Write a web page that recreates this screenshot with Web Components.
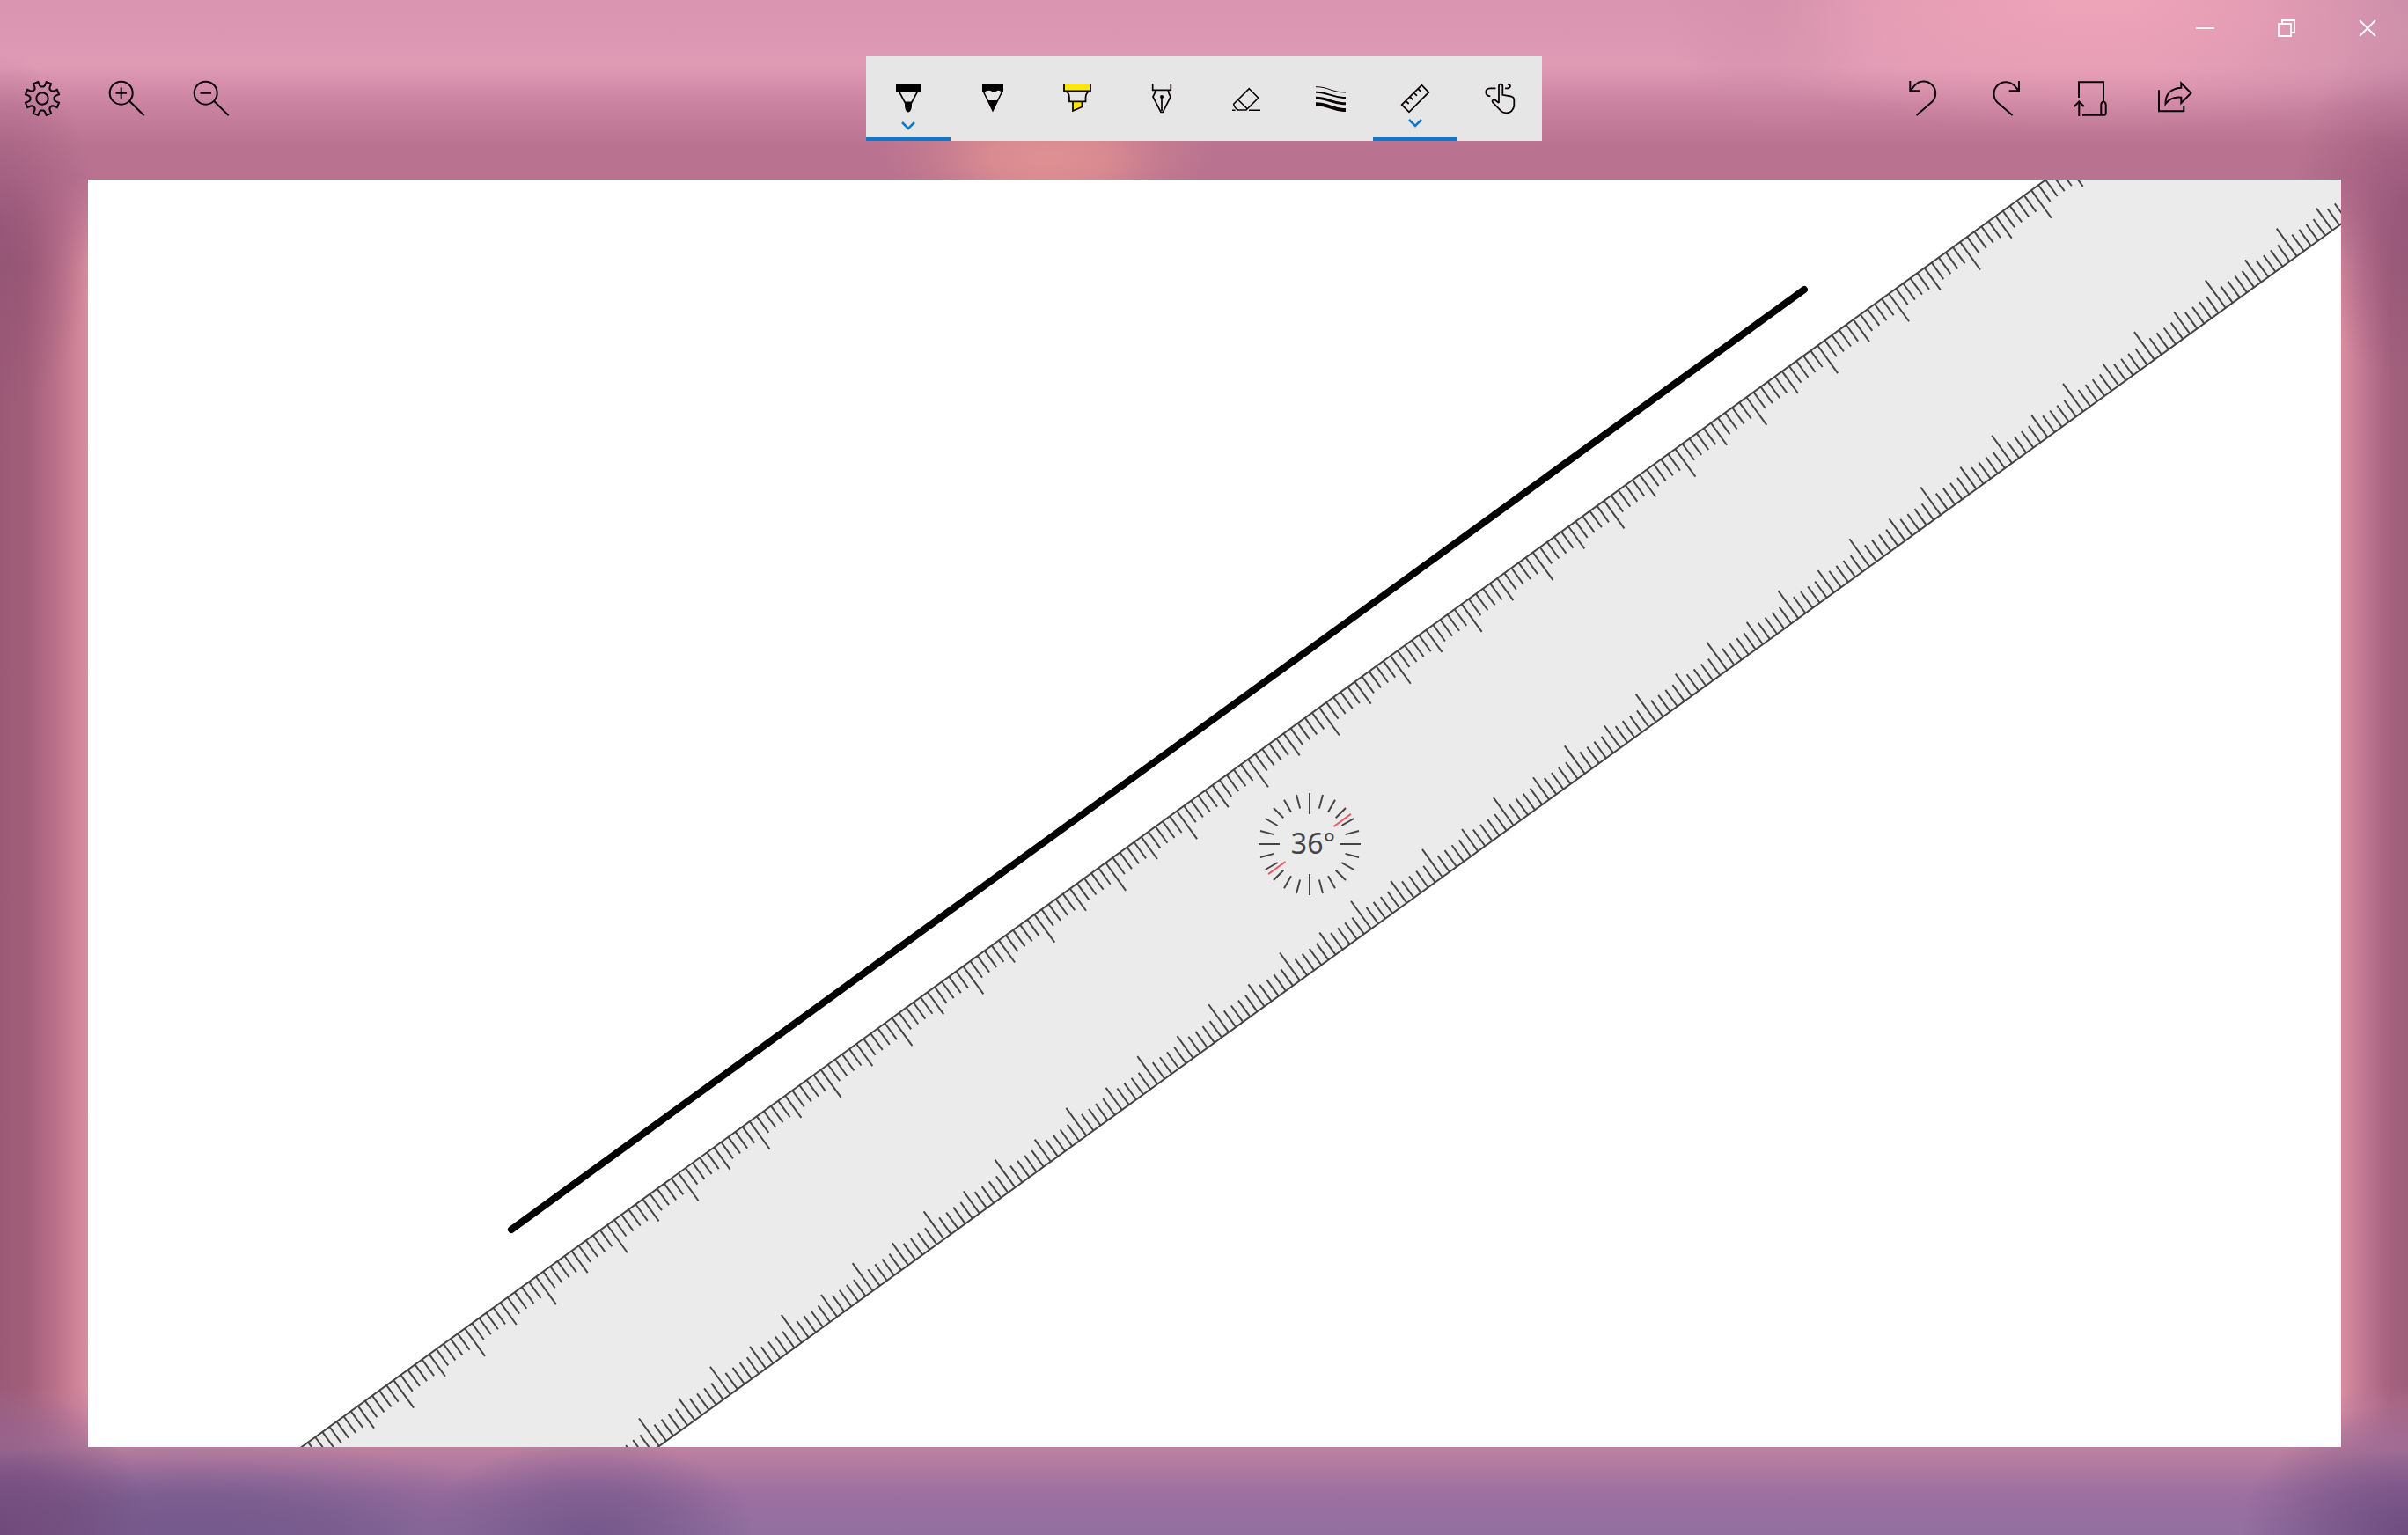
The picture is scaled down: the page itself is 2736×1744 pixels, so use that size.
<!DOCTYPE html>
<html lang="en">
<head>
<meta charset="utf-8">
<title>Sketchpad</title>
<style>
html, body { margin: 0; height: 100%; }
body { font-family: "Noto Sans", "Open Sans", sans-serif; overflow: hidden; }
</style>
</head>
<body>
<sketch-app></sketch-app>
<script>
const BLUE = '#0f78c8';

function gearPath() {
  const p = [];
  for (let k = 0; k < 8; k++) {
    for (const [a, r] of [[-14, 19.6], [-11, 15], [-6, 13.6], [6, 13.6], [11, 15], [14, 19.6]]) {
      const t = (k * 45 + a) * Math.PI / 180;
      p.push((48 + r * Math.sin(t)).toFixed(2) + ' ' + (48 - r * Math.cos(t)).toFixed(2));
    }
  }
  return 'M' + p.join('L') + 'Z';
}

const ICONS = {
  settings: `<path d="${gearPath()}"/><circle cx="48" cy="48" r="6.7"/>`,
  zoomin: '<circle cx="41.7" cy="41.7" r="13"/><path d="M51.3 51L67.7 67.3M35.5 41.7H48M41.7 35.5V48"/>',
  zoomout: '<circle cx="41.7" cy="41.7" r="13"/><path d="M51.3 51L67.7 67.3M35.5 41.7H48"/>',
  undo: '<path d="M34.3 28V39.3H45.3M34.5 39L39.5 33.2A13.5 13.5 0 1 1 58.6 52.2L41.6 67"/>',
  redo: '<path d="M62 28V39.3H50.7M61.7 39L56.7 33.2A13.5 13.5 0 1 0 37.4 52.2L54.6 67"/>',
  page: '<path d="M34 47V29.3H62V51M38 66.7H63M59.3 66V55Q59.3 52.5 62 51Q64.7 52.5 64.7 55V64.5Q64.7 66.7 62.6 66.7M34.3 68V51.5M28.8 57L34.3 51.5L39.8 57"/>',
  share: '<path d="M29 38.3V62.3H57.3V56"/><path d="M54.3 30.5L65.5 41.7L54.3 53V46.7Q43 45.5 36.5 54Q36.5 37 54.3 35.8Z"/>',
  pen: '<path fill="#000" stroke="none" d="M34 32H62V40H34ZM44 51.5H52V57Q51 63.5 48 63.5Q45 63.5 44 57Z"/><path d="M37 39L45 54M59 39L51 54" stroke-width="1.6"/>',
  pencil: '<path fill="#000" stroke="none" d="M36 32H60V40L57.5 41Q56.5 38 53 39Q50 42 48 40.5Q45 38 42.5 39Q40 39 38.5 41L36 40ZM42 50H54L48 63Z"/><path d="M36.8 39L48 61.5L59.2 39" stroke-width="1.6"/>',
  marker: '<path fill="#ffe800" stroke="none" d="M33 32H63V39H33ZM43 52H53V58L43 62.5Z"/><path d="M33 32V39.3H63V32M35 39.5Q39 42 39 47V51.3H57.5V47Q57.5 42 61.5 39.5M43 52V62L53.5 57.5V51.5" stroke-width="1.8"/>',
  nib: '<path d="M37.7 31V38.3H58.3V31M41 38.5Q40 43 38 46L47 63.5H49.3L58 46Q56 43 55.2 38.5M48 46V62" stroke-width="1.7"/><circle cx="48" cy="46" r="2" fill="#000" stroke="none"/>',
  eraser: '<path d="M51.3 36.7L61.7 47.2L48 61H38.7Q34 58 33.7 54.3ZM38.7 49.3L49.5 60M32 61.3H35.5M51 61.3H64" stroke-width="1.6"/>',
  waves: '<path d="M31 34.7C45 34.5 49 41 65 41" stroke-width="1"/><path d="M31 40.7C45 40.5 49 47 65 47" stroke-width="2"/><path d="M31 47.3C45 47.1 49 53.8 65 53.8" stroke-width="3"/><path d="M31 54.3C45 54.1 49 61 65 61" stroke-width="4"/>',
  ruler: '<path d="M55.3 32.7L63.3 41L41 63.3L32.7 55ZM51.3 37L54.5 40.2M46.7 41.6L49.9 44.8M42.1 46.2L45.3 49.4M37.5 50.8L40.7 54" stroke-width="1.8"/>',
  touch: '<path d="M43.5 36.3H37Q32.3 36.5 32.3 40.5Q32.3 45 37.3 45.3M54 36.3Q59.5 37 60 33.8Q60 31.5 56.8 31.9M47 53V34Q47 31.7 49.2 31.7Q51.3 31.7 51.3 34V43.8L61 45.5Q64.3 46.5 64.3 49.5V56.5Q62.5 64.3 55.5 64.3Q51.5 64.3 49.5 62L40 52.3Q38.8 50 41 49.3Q42 49 43.3 50L47 53" stroke-width="1.8"/>',
};

class IconButton extends HTMLElement {
  connectedCallback() {
    const on = this.hasAttribute('selected');
    const top = Number(this.getAttribute('chevron') || 0);
    this.attachShadow({ mode: 'open' }).innerHTML = `
      <style>
        :host { display: block; }
        button { display: block; width: 96px; height: 96px; padding: 0; border: 0; background: none; }
        button.on { box-shadow: inset 0 -4px ${BLUE}; }
        svg { display: block; fill: none; stroke: #0a0206; stroke-width: 2; }
      </style>
      <button class="${on ? 'on' : ''}" aria-label="${this.getAttribute('label')}">
        <svg width="96" height="96" viewBox="0 0 96 96" aria-hidden="true">${ICONS[this.getAttribute('icon')]}
        ${on ? `<path d="M41 ${top}L48 ${top + 7}L55 ${top}" stroke="${BLUE}" stroke-width="2.6"/>` : ''}</svg>
      </button>`;
  }
}
customElements.define('icon-button', IconButton);

class TitleBar extends HTMLElement {
  connectedCallback() {
    const b = (label, d) => `<button aria-label="${label}"><svg width="92" height="64" viewBox="0 0 92 64"><path d="${d}"/></svg></button>`;
    this.attachShadow({ mode: 'open' }).innerHTML = `
      <style>
        :host { display: flex; justify-content: flex-end; height: 64px; }
        button { display: block; width: 92px; height: 64px; padding: 0; border: 0; background: none; }
        svg { display: block; fill: none; stroke: #fff; stroke-width: 1.8; }
      </style>
      ${b('Minimize', 'M35 32H56')}
      ${b('Restore', 'M37 27H51V41H37ZM41 27V23H55V37H51')}
      ${b('Close', 'M37 23L55 41M55 23L37 41')}`;
  }
}
customElements.define('title-bar', TitleBar);

class CommandBar extends HTMLElement {
  connectedCallback() {
    this.attachShadow({ mode: 'open' }).innerHTML = `
      <style>
        :host { display: grid; grid-template-columns: 1fr auto 1fr; }
        div { display: flex; }
        .tools { background: #e6e6e6; }
        .end { justify-content: flex-end; padding-right: 216px; }
      </style>
      <div><slot name="start"></slot></div>
      <div class="tools" role="toolbar"><slot></slot></div>
      <div class="end"><slot name="end"></slot></div>`;
  }
}
customElements.define('command-bar', CommandBar);

class AngleRuler extends HTMLElement {
  connectedCallback() {
    const angle = Number(this.getAttribute('angle'));
    let ticks = '', dial = '';
    for (let t = -1600; t <= 1600; t += 10) {
      const len = t % 100 === 0 ? 40 : t % 50 === 0 ? 32 : 24;
      ticks += `M${t} -119V${len - 120}M${t} 119V${120 - len}`;
    }
    for (let a = 0; a < 360; a += 15) {
      const r = a * Math.PI / 180, i = a % 90 ? 42 : 34, c = Math.cos(r), s = Math.sin(r);
      dial += `M${(i * c).toFixed(2)} ${(i * s).toFixed(2)}L${(58 * c).toFixed(2)} ${(58 * s).toFixed(2)}`;
    }
    this.attachShadow({ mode: 'open' }).innerHTML = `
      <style>
        :host { display: block; height: 100%; }
        svg { display: block; width: 100%; height: 100%; fill: none; }
        text { font: 32px "Noto Sans", "Open Sans", sans-serif; fill: #444; }
      </style>
      <svg viewBox="0 0 2560 1440" preserveAspectRatio="xMidYMid slice">
        <path d="M481 1193L1950 125" stroke="#000" stroke-width="8" stroke-linecap="round"/>
        <g transform="translate(1388 755)">
          <g transform="rotate(${-angle})">
            <rect x="-1700" y="-119" width="3400" height="238" fill="#ebebeb" stroke="#444" stroke-width="2"/>
            <path d="${ticks}" stroke="#444" stroke-width="2"/>
            <path d="M34 0H58M-34 0H-58" stroke="#ee5a66" stroke-width="2"/>
          </g>
          <path d="${dial}" stroke="#444" stroke-width="2"/>
          <text x="4" y="11" text-anchor="middle">${angle}°</text>
        </g>
      </svg>`;
  }
}
customElements.define('angle-ruler', AngleRuler);

class SketchApp extends HTMLElement {
  connectedCallback() {
    this.attachShadow({ mode: 'open' }).innerHTML = `
      <style>
        :host {
          display: flex; flex-direction: column; height: 100vh;
          background:
            radial-gradient(190px 90px at 43.5% 180px, #e09092 0%, #e09092cc 35%, #e0909240 70%, #e0909200 100%),
            radial-gradient(480px 150px at 87% 0, #eea4b9 0%, #eea4b9aa 40%, #eea4b900 100%),
            radial-gradient(130px 150px at 74% 0, #cb89a5cc 0%, #cb89a566 45%, #cb89a500 100%),
            radial-gradient(320px 160px at 100% 0, #be86a1 0%, #be86a188 45%, #be86a100 100%),
            radial-gradient(110px 200px at 0 260px, #8f5075aa 0%, #8f507555 50%, #8f507500 100%),
            radial-gradient(130px 200px at 100% 230px, #8f5075bb 0%, #8f507555 50%, #8f507500 100%),
            radial-gradient(170px 170px at 0 100%, #704a7a 0%, #704a7aaa 45%, #704a7a00 100%),
            radial-gradient(420px 110px at 8% 100%, #75598c 0%, #75598ccc 40%, #75598c44 75%, #75598c00 100%),
            radial-gradient(190px 110px at 24.5% 100%, #77588c 0%, #77588caa 45%, #77588c00 100%),
            radial-gradient(190px 150px at 100% 100%, #6e4c80 0%, #6e4c8088 50%, #6e4c8000 100%),
            linear-gradient(transparent calc(100% - 170px), #b97a9e99 calc(100% - 125px), #bd80a0 calc(100% - 96px), #9c70a0 calc(100% - 48px), #9070a0 100%),
            linear-gradient(#d994b0 0, #df9ab4 75px, #c9829f 120px, #ba7490 165px, #b8718f 200px, #b8718f00 300px),
            linear-gradient(90deg, #9b5a76 0, #a05e78 30px, #b87088 62px, #d88c9f 98px, #d88c9f calc(100% - 74px), #bd7590 calc(100% - 48px), #a2617c calc(100% - 20px), #9f5f7b 100%);
        }
        main { flex: 1; min-height: 0; margin: 44px 76px 100px 100px; background: #fff; overflow: hidden; }
      </style>
      <title-bar></title-bar>
      <command-bar>
        <icon-button slot="start" icon="settings" label="Settings"></icon-button>
        <icon-button slot="start" icon="zoomin" label="Zoom in"></icon-button>
        <icon-button slot="start" icon="zoomout" label="Zoom out"></icon-button>
        <icon-button icon="pen" label="Ballpoint pen" selected chevron="75"></icon-button>
        <icon-button icon="pencil" label="Pencil"></icon-button>
        <icon-button icon="marker" label="Highlighter"></icon-button>
        <icon-button icon="nib" label="Calligraphy pen"></icon-button>
        <icon-button icon="eraser" label="Eraser"></icon-button>
        <icon-button icon="waves" label="Stroke width"></icon-button>
        <icon-button icon="ruler" label="Ruler" selected chevron="72"></icon-button>
        <icon-button icon="touch" label="Touch writing"></icon-button>
        <icon-button slot="end" icon="undo" label="Undo"></icon-button>
        <icon-button slot="end" icon="redo" label="Redo"></icon-button>
        <icon-button slot="end" icon="page" label="Page"></icon-button>
        <icon-button slot="end" icon="share" label="Share"></icon-button>
      </command-bar>
      <main><angle-ruler angle="36"></angle-ruler></main>`;
  }
}
customElements.define('sketch-app', SketchApp);
</script>
</body>
</html>
